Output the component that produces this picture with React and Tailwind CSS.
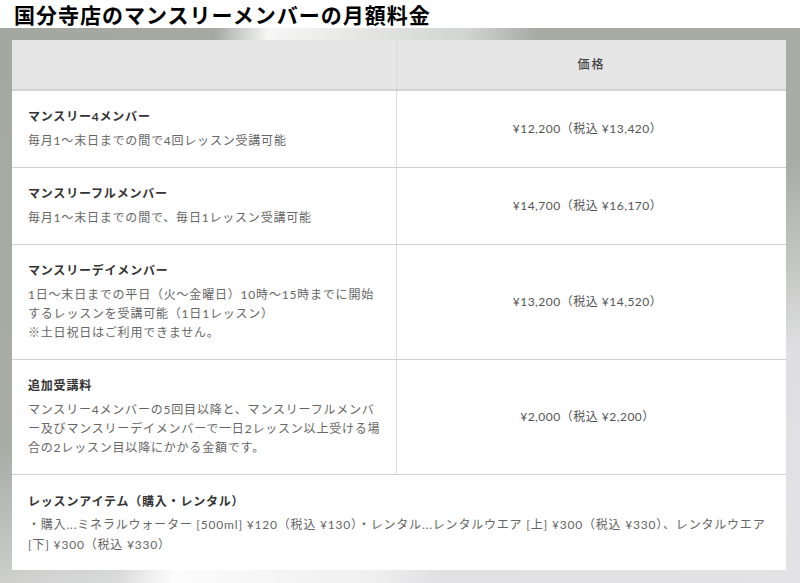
const font = { fontFamily: 'Lato, "Noto Sans CJK JP", sans-serif' }

const rows = [
  {
    title: 'マンスリー4メンバー',
    lines: ['毎月1〜末日までの間で4回レッスン受講可能'],
    price: '¥12,200（税込 ¥13,420）',
  },
  {
    title: 'マンスリーフルメンバー',
    lines: ['毎月1〜末日までの間で、毎日1レッスン受講可能'],
    price: '¥14,700（税込 ¥16,170）',
  },
  {
    title: 'マンスリーデイメンバー',
    lines: [
      '1日〜末日までの平日（火〜金曜日）10時〜15時までに開始',
      'するレッスンを受講可能（1日1レッスン）',
      '※土日祝日はご利用できません。',
    ],
    price: '¥13,200（税込 ¥14,520）',
  },
  {
    title: '追加受講料',
    lines: [
      'マンスリー4メンバーの5回目以降と、マンスリーフルメンバ',
      'ー及びマンスリーデイメンバーで一日2レッスン以上受ける場',
      '合の2レッスン目以降にかかる金額です。',
    ],
    price: '¥2,000（税込 ¥2,200）',
  },
]

export default function App() {
  return (
    <div className="w-[800px] h-[583px] bg-white flex flex-col overflow-hidden" style={font}>
      {/* Heading */}
      <div className="h-[28px] pl-[14px] pt-[1px]">
        <h1
          className="text-[21px] leading-[26px] font-bold text-black tracking-[1px]"
          style={{ fontFamily: '"Noto Sans CJK JP", sans-serif' }}
        >
          国分寺店のマンスリーメンバーの月額料金
        </h1>
      </div>

      {/* Photo backdrop + table */}
      <div className="flex-1 pt-[12px] pl-[12px] pr-[14px] bg-[linear-gradient(100deg,rgba(255,255,255,0)_24%,rgba(255,255,255,0.9)_30%,rgba(255,255,255,0.5)_52%,rgba(255,255,255,0)_60%),linear-gradient(160deg,#a4a8a1_0%,#a9ada6_50%,#c4c6c2_62%,#dfdfe1_72%,#e3e3e5_100%)]">
        <div className="bg-white w-[774px]">
          {/* Header */}
          <div className="grid grid-cols-[385px_1fr] h-[51px] bg-[#e5e5e5] border-b-2 border-[#d2d2d2]">
            <div className="border-r border-[#d8d8d8]" />
            <div className="flex items-center justify-center text-[12px] text-[#444] tracking-[2px] font-medium">
              価格
            </div>
          </div>

          {rows.map((row) => (
            <div key={row.title} className="grid grid-cols-[385px_1fr] border-b border-[#d0d0d0]">
              <div className="px-[16px] pt-[16px] pb-[17px] border-r border-[#dcdcdc]">
                <p className="text-[12px] leading-[20px] font-bold text-[#333] tracking-[0.8px]">{row.title}</p>
                <p className="mt-[4px] text-[12px] leading-[19px] text-[#666] tracking-[0.8px] whitespace-nowrap">
                  {row.lines.map((line, i) => (
                    <span key={i} className="block">{line}</span>
                  ))}
                </p>
              </div>
              <div className="flex items-center justify-center text-[12px] text-[#555] tracking-[0.5px] pr-[8px]">
                {row.price}
              </div>
            </div>
          ))}

          {/* Lesson items */}
          <div className="px-[16px] pt-[17px] pb-[15px]">
            <p className="text-[12px] leading-[20px] font-bold text-[#333] tracking-[0.8px]">
              レッスンアイテム（購入・レンタル）
            </p>
            <p className="mt-[3px] text-[12px] leading-[20px] text-[#666] tracking-[0.8px] whitespace-nowrap">
              <span className="block">
                ・購入...ミネラルウォーター [500ml] ¥120（税込 ¥130）・レンタル...レンタルウエア [上] ¥300（税込 ¥330）、レンタルウエア
              </span>
              <span className="block">[下] ¥300（税込 ¥330）</span>
            </p>
          </div>
        </div>
      </div>
    </div>
  )
}
